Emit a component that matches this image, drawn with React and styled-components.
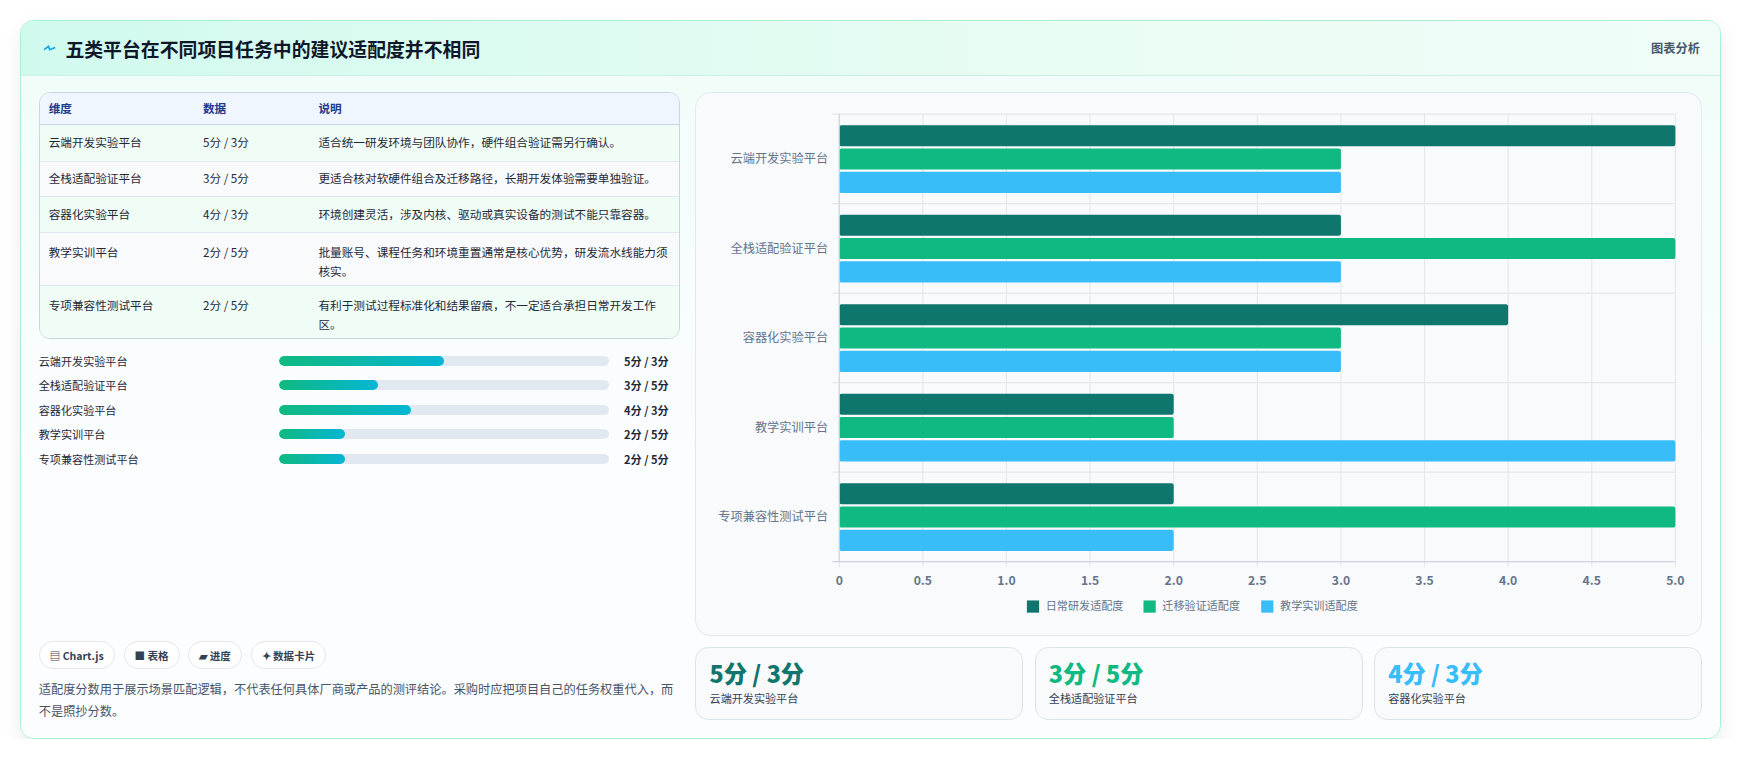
import React from "react";
import styled, { createGlobalStyle } from "styled-components";

const G = createGlobalStyle`
  body{margin:0;background:#fff;font-family:"Noto Sans CJK SC","Noto Sans",sans-serif;color:#1f2937;}
`;
const Page = styled.div`zoom:1.1104;padding:18px 0 0 18px;width:1532px;`;
const Card = styled.div`
  width:1530px;height:646px;border:1px solid #a7f3d0;border-radius:12px;overflow:hidden;
  background:linear-gradient(180deg,#f0fdf9,#fbfdff 60%);box-shadow:0 8px 18px rgba(0,0,0,.08);
  display:flex;flex-direction:column;`;
const Header = styled.div`
  height:49px;flex:none;display:flex;align-items:center;justify-content:space-between;padding:0 18px 0 20px;
  background:linear-gradient(90deg,#d1faee,#ecfdf5 70%,#f0fdf9);border-bottom:1px solid #ccefe6;`;
const Title = styled.h1`margin:0;font-size:17px;font-weight:700;color:#0f172a;display:flex;align-items:center;gap:8px;`;
const Tag = styled.span`font-size:11px;color:#475569;font-weight:600;`;
const Body = styled.div`flex:1;display:flex;gap:14px;padding:14px 16px 15px 16px;`;
const Left = styled.div`width:578px;display:flex;flex-direction:column;`;
const Right = styled.div`flex:1;display:flex;flex-direction:column;gap:10px;`;
const Table = styled.div`border:1px solid #cbd5e1;border-radius:10px;overflow:hidden;font-size:10.5px;`;
const Row = styled.div`
  display:grid;grid-template-columns:139px 104px 1fr;padding:0 8px;min-height:${p=>p.h}px;align-items:${p=>p.top?"start":"center"};
  padding-top:${p=>p.top?9:0}px;box-sizing:border-box;
  background:${p=>p.head?"#eff6ff":p.alt?"#f8fafc":"#f0fdf6"};
  color:${p=>p.head?"#1e3a8a":"#1f2937"};font-weight:${p=>p.head?700:400};
  border-top:${p=>p.first?"none":"1px solid #e2e8f0"};
  ${p=>p.head&&"border-bottom:1px solid #cbd5e1;"}
  line-height:17px;`;
const Bars = styled.div`display:flex;flex-direction:column;gap:5px;margin-top:11px;`;
const BarRow = styled.div`display:grid;grid-template-columns:216px 298px 1fr;align-items:center;font-size:10px;height:17px;`;
const Track = styled.div`height:9px;border-radius:5px;background:#e2e8f0;overflow:hidden;`;
const Fill = styled.div`height:100%;border-radius:5px;background:linear-gradient(90deg,#10b981,#06b6d4);`;
const Val = styled.span`text-align:right;font-weight:700;padding-right:10px;`;
const Chips = styled.div`display:flex;gap:8px;margin-top:auto;`;
const Chip = styled.span`font-size:9.5px;font-weight:700;color:#334155;border:1px solid #e2e8f0;border-radius:14px;padding:5px 9px;background:#fff;`;
const Note = styled.p`margin:9px 0 0;font-size:11px;line-height:19px;color:#475569;`;
const ChartBox = styled.div`height:488px;border:1px solid #e2e8f0;border-radius:14px;background:#f8fafc;`;
const Stats = styled.div`display:grid;grid-template-columns:repeat(3,1fr);gap:10px;height:66px;`;
const Stat = styled.div`border:1px solid #dbe4ee;border-radius:12px;background:#f8fafc;padding:10px 12px;`;
const Big = styled.div`font-size:21px;font-weight:800;color:${p=>p.c};line-height:26px;`;
const Small = styled.div`font-size:10px;color:#334155;margin-top:2px;`;

const data=[["云端开发实验平台",5,3,3,"5分 / 3分","适合统一研发环境与团队协作，硬件组合验证需另行确认。",32],
["全栈适配验证平台",3,5,3,"3分 / 5分","更适合核对软硬件组合及迁移路径，长期开发体验需要单独验证。",32],
["容器化实验平台",4,3,3,"4分 / 3分","环境创建灵活，涉及内核、驱动或真实设备的测试不能只靠容器。",32],
["教学实训平台",2,2,5,"2分 / 5分","批量账号、课程任务和环境重置通常是核心优势，研发流水线能力须核实。",48],
["专项兼容性测试平台",2,5,2,"2分 / 5分","有利于测试过程标准化和结果留痕，不一定适合承担日常开发工作区。",48]];
const fills=[50,30,40,20,20];
const cols=["#0f766e","#10b981","#38bdf8"];

function Chart(){
  const x0=129,x1=882,y0=19,h=403,cat=h/5,u=(x1-x0)/5;
  const els=[];
  for(let i=0;i<=10;i++){const x=x0+i*u/2;els.push(<line key={"g"+i} x1={x} x2={x} y1={y0} y2={y0+h+5} stroke="#e5e7eb"/>);
    els.push(<text key={"t"+i} x={x} y={y0+h+21} fontSize="11" fill="#64748b" textAnchor="middle" fontWeight="600">{i===0?"0":(i/2).toFixed(1)}</text>);}
  for(let i=0;i<=5;i++)els.push(<line key={"h"+i} x1={x0-6} x2={x1} y1={y0+i*cat} y2={y0+i*cat} stroke="#e5e7eb"/>);
  data.forEach((d,i)=>{const cy=y0+i*cat;
    [d[1],d[2],d[3]].forEach((v,j)=>els.push(<rect key={i+"-"+j} x={x0} y={cy+10+j*21} width={v*u} height={19} rx="2" fill={cols[j]}/>));
    els.push(<text key={"l"+i} x={x0-10} y={cy+cat/2+4} fontSize="11" fill="#64748b" textAnchor="end">{d[0]}</text>);});
  els.push(<line key="ax" x1={x0} x2={x0} y1={y0} y2={y0+h} stroke="#cbd5e1"/>);
  els.push(<line key="ay" x1={x0-6} x2={x1} y1={y0+h} y2={y0+h} stroke="#cbd5e1"/>);
  const lg=[["日常研发适配度",298],["迁移验证适配度",403],["教学实训适配度",509]];
  lg.forEach(([t,x],j)=>{els.push(<rect key={"lr"+j} x={x} y={457} width={11} height={11} fill={cols[j]}/>);
    els.push(<text key={"lt"+j} x={x+17} y={466} fontSize="10" fill="#64748b">{t}</text>);});
  return <svg width="905" height="488">{els}</svg>;
}

export default function App(){
  return <Page><G/><Card>
    <Header><Title><svg width="12" height="10" viewBox="0 0 12 10"><path d="M1 6 L5 3 L6 6 L11 4" stroke="#0ea5e9" strokeWidth="1.5" fill="none"/></svg>五类平台在不同项目任务中的建议适配度并不相同</Title><Tag>图表分析</Tag></Header>
    <Body>
      <Left>
        <Table>
          <Row head first h={29}><span>维度</span><span>数据</span><span>说明</span></Row>
          {data.map((d,i)=><Row key={i} first={i===0} alt={i%2===1} h={d[6]} top={d[6]>32}><span>{d[0]}</span><span>{d[4]}</span><span>{d[5]}</span></Row>)}
        </Table>
        <Bars>{data.map((d,i)=><BarRow key={i}><span>{d[0]}</span><Track><Fill style={{width:fills[i]+"%"}}/></Track><Val>{d[4]}</Val></BarRow>)}</Bars>
        <Chips><Chip>▤ Chart.js</Chip><Chip>■ 表格</Chip><Chip>▰ 进度</Chip><Chip>✦ 数据卡片</Chip></Chips>
        <Note>适配度分数用于展示场景匹配逻辑，不代表任何具体厂商或产品的测评结论。采购时应把项目自己的任务权重代入，而不是照抄分数。</Note>
      </Left>
      <Right>
        <ChartBox><Chart/></ChartBox>
        <Stats>
          <Stat><Big c="#0f766e">5分 / 3分</Big><Small>云端开发实验平台</Small></Stat>
          <Stat><Big c="#10b981">3分 / 5分</Big><Small>全栈适配验证平台</Small></Stat>
          <Stat><Big c="#38bdf8">4分 / 3分</Big><Small>容器化实验平台</Small></Stat>
        </Stats>
      </Right>
    </Body>
  </Card></Page>;
}
